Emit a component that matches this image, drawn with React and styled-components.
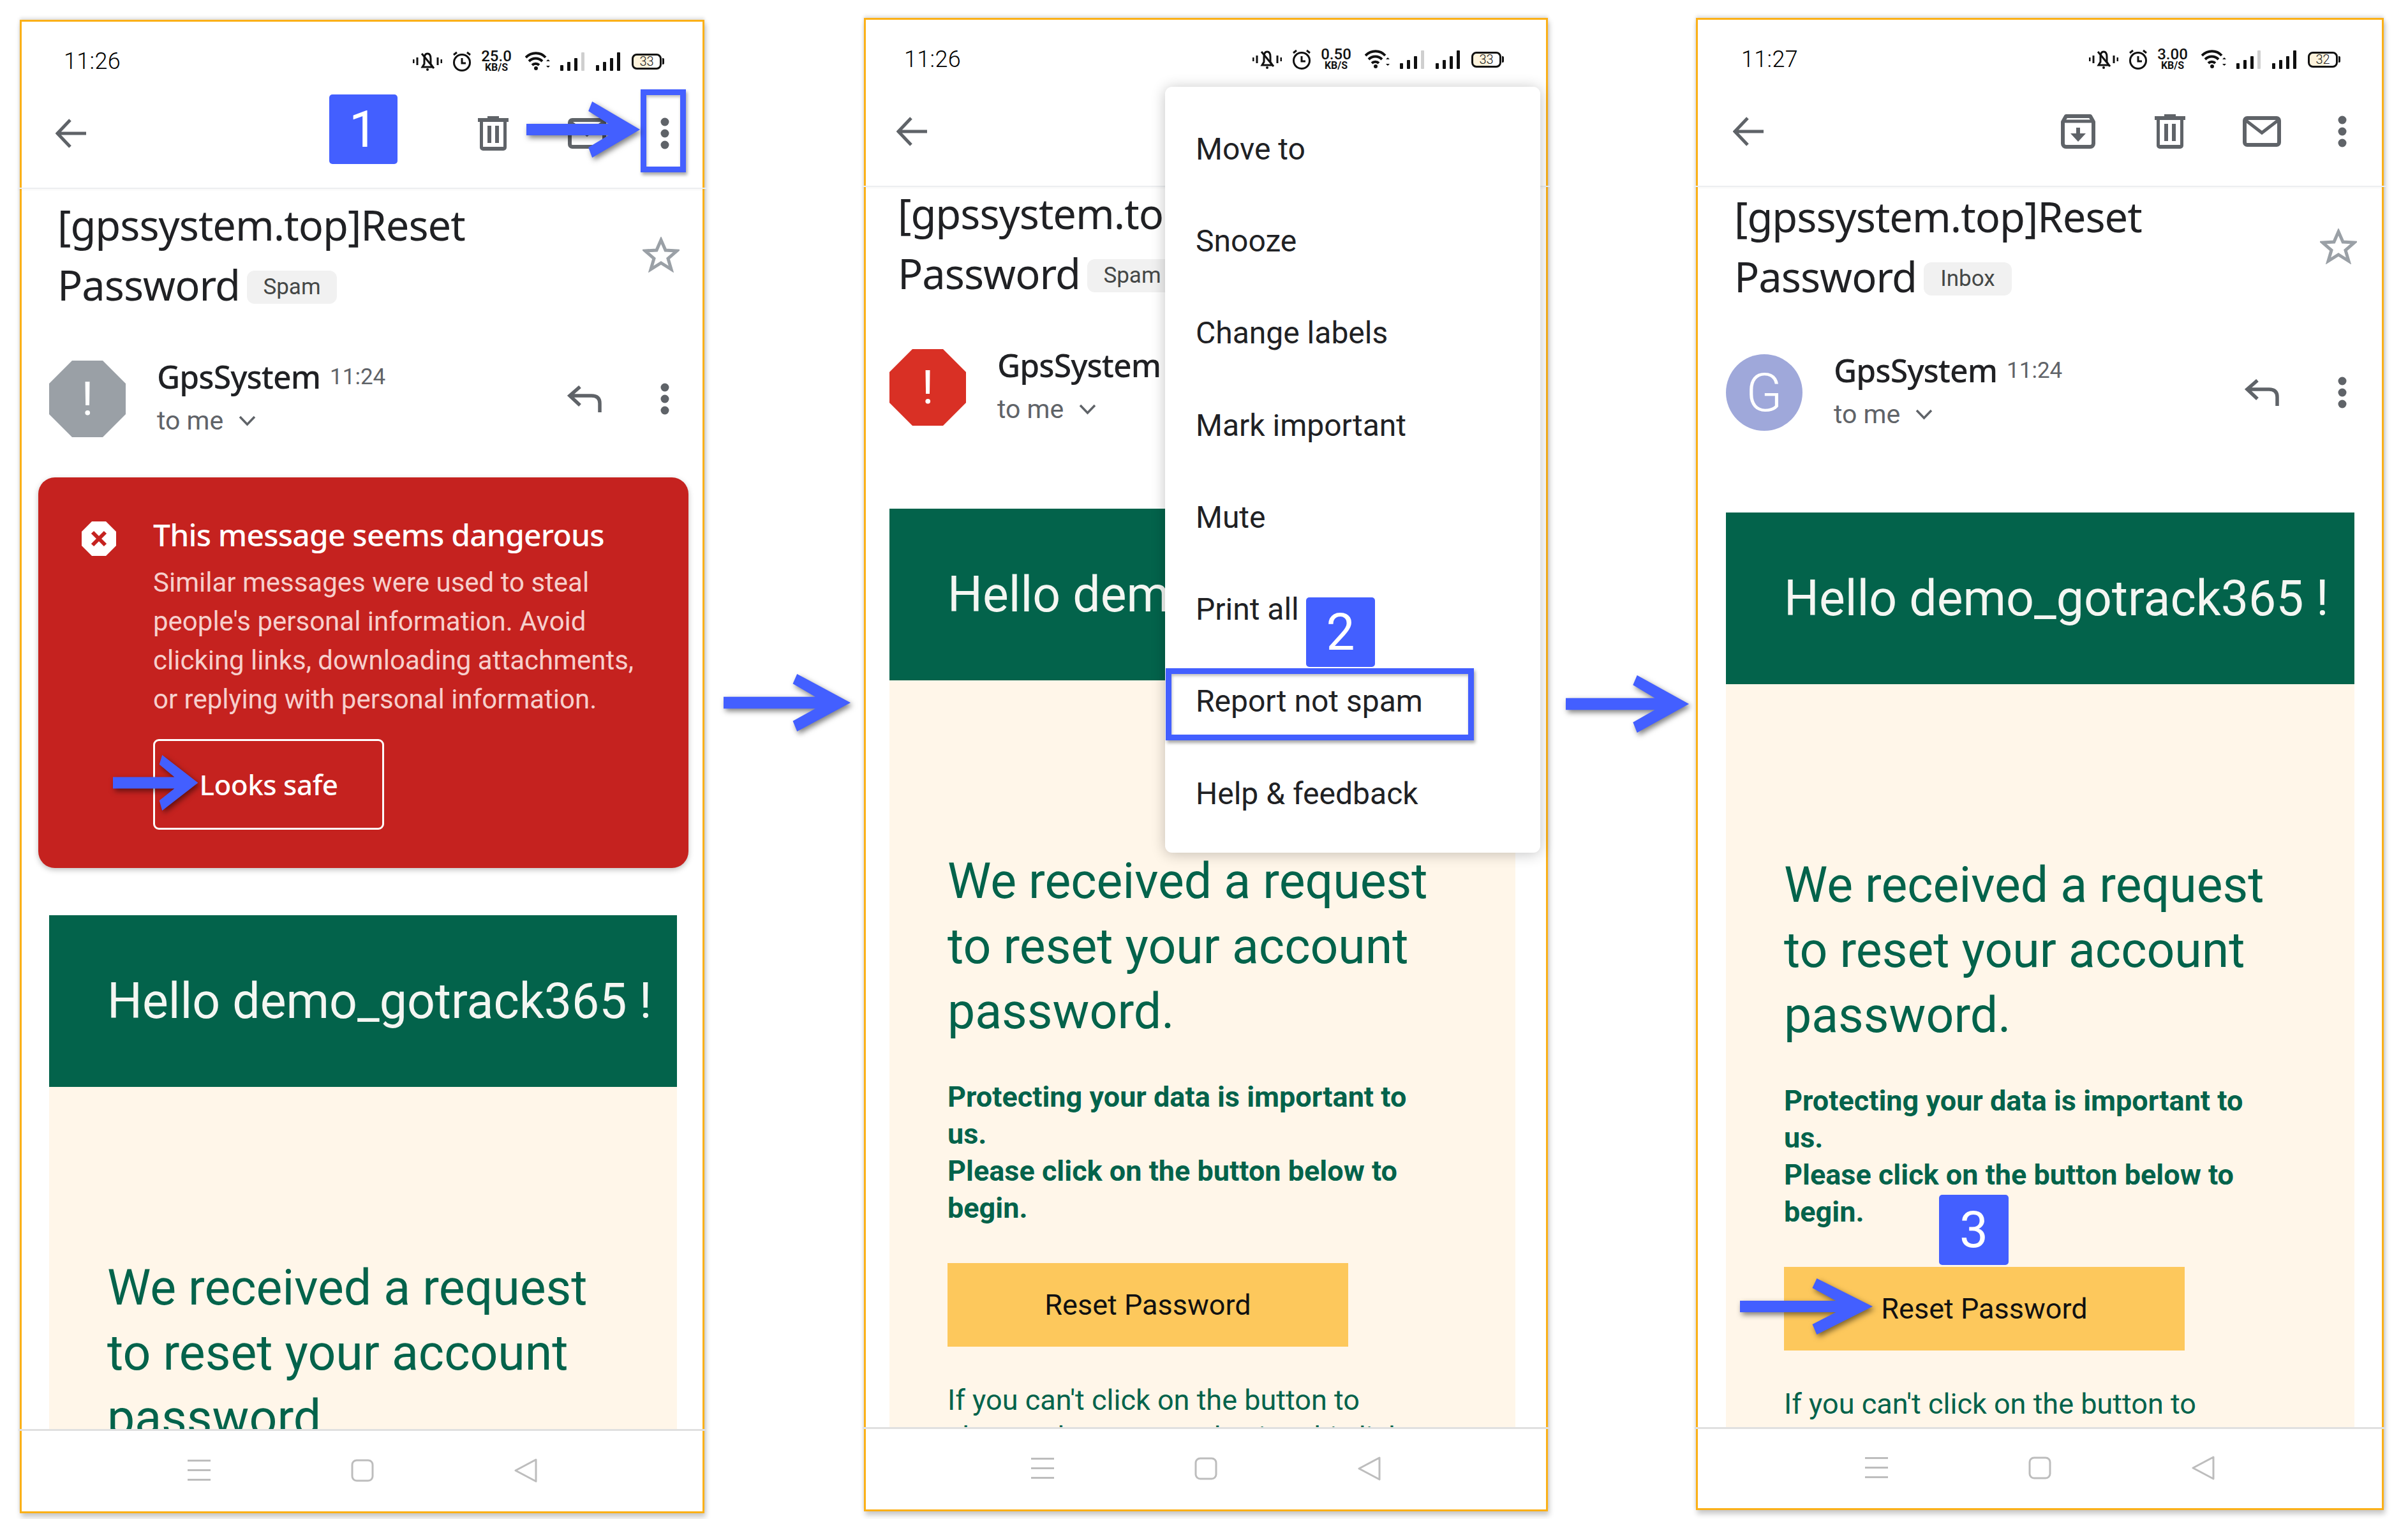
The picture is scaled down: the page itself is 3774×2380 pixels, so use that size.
import React from "react";
import styled, { createGlobalStyle } from "styled-components";

const Global = createGlobalStyle`
  html, body { margin: 0; padding: 0; background: #fff; }
  * { box-sizing: border-box; }
`;

const BLUE = "#435fff";
const GREEN = "#03634b";
const INK = "#202124";
const GREY = "#5f6368";

const Page = styled.div`
  position: relative;
  width: 3774px;
  height: 2380px;
  background: #fff;
  overflow: hidden;
  display: flex;
  align-items: flex-start;
  padding-left: 31px;
  font-family: Roboto, "Liberation Sans", sans-serif;
  color: ${INK};
`;

const Phone = styled.section`
  position: relative;
  flex: none;
  width: ${(p) => p.$w}px;
  height: ${(p) => p.$h}px;
  margin-top: ${(p) => p.$top}px;
  border: 3px solid #fbb017;
  background: #fff;
  box-shadow: 0 -3px 5px rgba(0, 0, 0, 0.12), 2px 6px 8px rgba(0, 0, 0, 0.22);
  display: flex;
  flex-direction: column;
`;

const Gap = styled.div`
  flex: none;
  width: ${(p) => p.$w}px;
  padding-left: ${(p) => p.$pad}px;
  margin-top: ${(p) => p.$top}px;
  display: flex;
`;

const StatusBar = styled.div`
  flex: none;
  height: 124px;
  display: flex;
  align-items: center;
  padding: 0 ${(p) => p.$right}px 0 ${(p) => p.$left}px;
`;

const Clock = styled.span`
  font-size: 36px;
  font-weight: 350;
  color: #000;
  letter-spacing: 0.3px;
  margin-right: auto;
`;

const StatusIcons = styled.div`
  display: flex;
  align-items: center;
  height: 34px;
`;

const AlarmSlot = styled.span`
  display: flex;
  margin-left: 16px;
`;

const Speed = styled.div`
  width: 48px;
  margin: 0 21px 0 15px;
  display: flex;
  flex-direction: column;
  align-items: center;
  color: #111;
  font-size: 24px;
  font-weight: 500;
  line-height: 19px;
  & > small {
    font-size: 16px;
    font-weight: 700;
    line-height: 15px;
  }
`;

const Battery = styled.div`
  position: relative;
  width: 47px;
  height: 25px;
  margin-left: 18px;
  margin-right: 4px;
  border: 3px solid #111;
  border-radius: 8px;
  background: linear-gradient(90deg, #fdf3dc 0 60%, #fff 60%);
  display: flex;
  align-items: center;
  justify-content: center;
  font-size: 20px;
  font-weight: 300;
  color: #222;
  &::after {
    content: "";
    position: absolute;
    right: -7px;
    top: 4px;
    width: 3px;
    height: 10px;
    background: #111;
    border-radius: 0 2px 2px 0;
  }
`;

const Toolbar = styled.div`
  position: relative;
  z-index: 2;
  flex: none;
  height: 138px;
  background: #fff;
  display: flex;
  align-items: flex-start;
  padding: 26px ${(p) => p.$right}px 0 ${(p) => p.$left}px;
  &::after {
    content: "";
    position: absolute;
    left: -6px;
    right: -6px;
    bottom: 0;
    height: 2px;
    background: #eceef0;
    box-shadow: 0 2px 3px rgba(0, 0, 0, 0.04);
  }
`;

const ToolSlot = styled.div`
  height: 50px;
  display: flex;
  align-items: center;
  margin-left: ${(p) => p.$ml || "0"};
`;

const Scroll = styled.div`
  flex: 1;
  min-height: 0;
  overflow: hidden;
  padding: 0 ${(p) => p.$right}px 0 ${(p) => p.$left}px;
`;

const SubjectRow = styled.div`
  display: flex;
  align-items: center;
  justify-content: space-between;
  padding-left: 13px;
  margin-right: -4px;
  margin-top: ${(p) => p.$mt}px;
`;

const Subject = styled.h1`
  margin: 0;
  font-family: "Noto Sans", Roboto, sans-serif;
  font-size: 65px;
  font-weight: 400;
  line-height: 94px;
  color: ${INK};
  white-space: nowrap;
  letter-spacing: -1px;
`;

const Chip = styled.span`
  display: inline-flex;
  vertical-align: 10px;
  align-items: center;
  justify-content: center;
  width: ${(p) => p.$w}px;
  height: 52px;
  margin-left: 11px;
  border-radius: 12px;
  background: #f1f1f1;
  font-family: Roboto, sans-serif;
  font-size: 35px;
  letter-spacing: 0;
  color: #444746;
`;

const SenderRow = styled.div`
  display: flex;
  align-items: center;
  height: 120px;
  margin-top: ${(p) => p.$mt}px;
  padding-right: 11px;
`;

const Avatar = styled.div`
  flex: none;
  width: 120px;
  height: 120px;
  background: ${(p) => p.$color};
  color: #fff;
  display: flex;
  align-items: center;
  justify-content: center;
  font-size: ${(p) => (p.$round ? 84 : 72)}px;
  font-weight: ${(p) => (p.$round ? 300 : 400)};
  border-radius: ${(p) => (p.$round ? "50%" : "0")};
  clip-path: ${(p) =>
    p.$round ? "none" : "polygon(30% 0, 70% 0, 100% 30%, 100% 70%, 70% 100%, 30% 100%, 0 70%, 0 30%)"};
`;

const SenderText = styled.div`
  flex: 1;
  min-width: 0;
  height: 120px;
  padding-left: 49px;
`;

const NameLine = styled.div`
  height: 50px;
  display: flex;
  align-items: center;
  gap: 15px;
  white-space: nowrap;
`;

const Name = styled.span`
  font-family: "Noto Sans", Roboto, sans-serif;
  font-size: 50px;
  font-weight: 500;
  letter-spacing: -1px;
  color: ${INK};
`;

const Stamp = styled.span`
  font-size: 35px;
  color: ${GREY};
`;

const ToLine = styled.div`
  height: 50px;
  margin-top: 19px;
  display: flex;
  align-items: center;
  gap: 24px;
  font-size: 41px;
  color: ${GREY};
`;

const ReplyIcons = styled.div`
  display: flex;
  align-items: center;
  gap: 91px;
`;

const Warning = styled.div`
  margin: 63px -18px 0 -17px;
  height: 612px;
  padding: 60px 40px 0 68px;
  border-radius: 26px;
  background: #c5221f;
  box-shadow: 0 3px 8px rgba(0, 0, 0, 0.25);
  display: grid;
  grid-template-columns: 54px 1fr;
  column-gap: 58px;
`;

const WarnIcon = styled.div`
  margin-top: 9px;
  height: 54px;
`;

const WarnTitle = styled.div`
  font-family: "Noto Sans", Roboto, sans-serif;
  font-size: 48px;
  font-weight: 500;
  line-height: 60px;
  letter-spacing: -0.8px;
  color: #fff;
  white-space: nowrap;
`;

const WarnBody = styled.p`
  margin: 14px 0 0;
  font-size: 42px;
  line-height: 61px;
  color: #f6cfcc;
  white-space: nowrap;
`;

const SafeButton = styled.div`
  width: 362px;
  height: 142px;
  margin-top: 32px;
  border: 3px solid #fff;
  border-radius: 9px;
  color: #fff;
  font-family: "Noto Sans", Roboto, sans-serif;
  font-size: 44px;
  font-weight: 500;
  letter-spacing: -0.5px;
  display: flex;
  align-items: center;
  justify-content: center;
`;

const Hero = styled.div`
  height: 269px;
  margin-top: ${(p) => p.$mt}px;
  background: ${GREEN};
  color: #f4f6f2;
  display: flex;
  align-items: center;
  padding-left: 91px;
  font-size: 77px;
  white-space: nowrap;
  overflow: hidden;
`;

const Cream = styled.div`
  background: #fff6e9;
  color: ${GREEN};
  padding: 264px 91px 80px;
  min-height: 1200px;
`;

const Lead = styled.h2`
  margin: 0;
  font-size: 77px;
  font-weight: 400;
  line-height: 102px;
  white-space: nowrap;
`;

const Strong = styled.p`
  margin: 54px 0 0;
  font-size: 45px;
  font-weight: 700;
  line-height: 58px;
  white-space: nowrap;
`;

const Reset = styled.div`
  width: 628px;
  height: 131px;
  margin-top: 57px;
  background: #fdc85c;
  color: #111;
  font-size: 45px;
  display: flex;
  align-items: center;
  justify-content: center;
`;

const Small = styled.p`
  margin: 55px 0 0;
  font-size: 45px;
  line-height: 58px;
  white-space: nowrap;
`;

const Nav = styled.div`
  position: relative;
  z-index: 2;
  flex: none;
  height: ${(p) => p.$h}px;
  background: #fff;
  display: flex;
  align-items: center;
  justify-content: center;
  gap: 220px;
  &::before {
    content: "";
    position: absolute;
    left: -5px;
    right: -5px;
    top: 0;
    height: 3px;
    background: #e0e0e0;
  }
`;

const Menu = styled.div`
  position: absolute;
  z-index: 4;
  left: 469px;
  top: 105px;
  width: 588px;
  height: 1200px;
  padding: 25px 0;
  background: #fff;
  border-radius: 11px;
  box-shadow: 0 2px 22px rgba(0, 0, 0, 0.24);
`;

const MenuItem = styled.div`
  height: 144.3px;
  padding-left: 48px;
  display: flex;
  align-items: center;
  font-size: 48px;
  color: ${INK};
`;

const Badge = styled.div`
  position: absolute;
  z-index: 6;
  left: ${(p) => p.$x}px;
  top: ${(p) => p.$y}px;
  width: ${(p) => p.$w}px;
  height: ${(p) => p.$h}px;
  background: ${BLUE};
  border-radius: 5px;
  color: #fff;
  font-size: 80px;
  font-weight: 400;
  display: flex;
  align-items: center;
  justify-content: center;
`;

const Highlight = styled.div`
  position: absolute;
  z-index: 6;
  left: ${(p) => p.$x}px;
  top: ${(p) => p.$y}px;
  width: ${(p) => p.$w}px;
  height: ${(p) => p.$h}px;
  border: 9px solid ${BLUE};
  box-shadow: 2px 4px 5px rgba(0, 0, 0, 0.35), inset 1px 3px 4px rgba(0, 0, 0, 0.25);
`;

const ArrowSvg = styled.svg`
  display: block;
  flex: none;
  overflow: visible;
  filter: drop-shadow(3px 4px 4px rgba(0, 0, 0, 0.5));
`;

const FloatingArrow = styled.div`
  position: absolute;
  z-index: 6;
  left: ${(p) => p.$x}px;
  top: ${(p) => p.$y}px;
`;

const Arrow = ({ w, h }) => (
  <ArrowSvg width={w} height={h} viewBox="0 0 210 88" preserveAspectRatio="none">
    <polygon points="0,35 151,35 114,15 121,0 209,44 121,88 114,72 151,53 0,53" fill={BLUE} />
  </ArrowSvg>
);

const BackIcon = () => (
  <svg width="48" height="46" viewBox="0 0 48 46" fill="none" stroke={GREY} strokeWidth="5">
    <path d="M23 2 L3 23 L23 44 M3 23 H48" />
  </svg>
);

const TrashIcon = () => (
  <svg width="48" height="54" viewBox="0 0 48 54" fill={GREY}>
    <rect x="15" y="0" width="18" height="4" />
    <rect x="0" y="3" width="48" height="6" />
    <path d="M3 8h5v40h32V8h5v41a5 5 0 0 1-5 5H8a5 5 0 0 1-5-5z" />
    <rect x="15" y="15" width="6" height="27" />
    <rect x="27" y="15" width="6" height="27" />
  </svg>
);

const MailIcon = () => (
  <svg width="60" height="48" viewBox="0 0 60 48" fill="none" stroke={GREY}>
    <rect x="3" y="3" width="54" height="42" rx="4" strokeWidth="6" />
    <path d="M4 6 L30 26 L56 6" strokeWidth="5" />
  </svg>
);

const ArchiveIcon = () => (
  <svg width="54" height="54" viewBox="0 0 54 54" fill="none" stroke={GREY}>
    <path d="M3 12 L8 3 H46 L51 12 V46 a5 5 0 0 1-5 5 H8 a5 5 0 0 1-5-5 Z" strokeWidth="6" strokeLinejoin="round" />
    <path d="M3 11 H51" strokeWidth="5" />
    <path d="M24 21 H30 V30 H39 L27 43 L15 30 H24 Z" fill={GREY} stroke="none" />
  </svg>
);

const Dots = () => (
  <svg width="16" height="50" viewBox="0 0 16 50" fill={GREY}>
    <circle cx="8" cy="7" r="6.5" />
    <circle cx="8" cy="25" r="6.5" />
    <circle cx="8" cy="43" r="6.5" />
  </svg>
);

const StarIcon = () => (
  <svg width="58" height="56" viewBox="0 0 58 56" fill="none" stroke="#9aa0a6" strokeWidth="5">
    <polygon points="29,5 36,21 54,22 40,34 45,51 29,41 13,51 18,34 4,22 22,21" />
  </svg>
);

const ReplyIcon = () => (
  <svg width="54" height="42" viewBox="0 0 54 42" fill="none" stroke={GREY} strokeWidth="5.5">
    <path d="M20 2 L4 16 L20 31 M4 16 H38 Q51 16 51 28 V42" />
  </svg>
);

const Chevron = () => (
  <svg width="27" height="17" viewBox="0 0 27 17" fill="none" stroke={GREY} strokeWidth="3.5">
    <path d="M2 2 L13.5 14 L25 2" />
  </svg>
);

const BellIcon = () => (
  <svg width="46" height="32" viewBox="0 0 46 32" fill="none" stroke="#111" strokeWidth="3">
    <path d="M15 25 H31 L28 20 V12 C28 7 26 4 23 4 C20 4 18 7 18 12 V20 Z" />
    <path d="M14 4 L33 27" />
    <path d="M1 13 V19 M7 10 V22 M39 10 V22 M45 13 V19" />
    <circle cx="23" cy="29" r="2" fill="#111" stroke="none" />
  </svg>
);

const AlarmIcon = () => (
  <svg width="30" height="32" viewBox="0 0 30 32" fill="none" stroke="#111" strokeWidth="3">
    <circle cx="15" cy="18" r="12.5" />
    <path d="M15 11 V19 H21" />
    <path d="M2 6 L7 2 M28 6 L23 2" />
  </svg>
);

const WifiIcon = () => (
  <svg width="40" height="30" viewBox="0 0 40 30" fill="none" stroke="#111" strokeWidth="4">
    <path d="M1 9 C10 0 24 0 32 9" />
    <path d="M6 15 C12 9 21 9 27 15" />
    <path d="M11 21 C14 18 19 18 22 21" />
    <circle cx="17" cy="26" r="3" fill="#111" stroke="none" />
    <path d="M36 12 L33 15 H39 Z M36 25 L33 22 H39 Z" fill="#111" stroke="none" />
  </svg>
);

const SignalSvg = styled.svg`
  margin-left: ${(p) => p.$ml}px;
`;

const SignalIcon = ({ dim, ml }) => (
  <SignalSvg width="38" height="31" viewBox="0 0 38 31" fill="#111" $ml={ml}>
    <rect x="0" y="21" width="5" height="9" rx="1" />
    <rect x="11" y="16" width="5" height="14" rx="1" />
    <rect x="22" y="10" width="5" height="20" rx="1" />
    <rect x="33" y="1" width="5" height="29" rx="1" fill={dim ? "#cfcfcf" : "#111"} />
  </SignalSvg>
);

const NavMenuIcon = () => (
  <svg width="36" height="33" viewBox="0 0 36 33" fill="#bdbdbd">
    <rect y="0" width="36" height="3" />
    <rect y="15" width="36" height="3" />
    <rect y="30" width="36" height="3" />
  </svg>
);

const NavHomeIcon = () => (
  <svg width="36" height="36" viewBox="0 0 36 36" fill="none" stroke="#bdbdbd" strokeWidth="3">
    <rect x="2" y="2" width="32" height="32" rx="7" />
  </svg>
);

const NavBackIcon = () => (
  <svg width="36" height="38" viewBox="0 0 36 38" fill="none" stroke="#bdbdbd" strokeWidth="3" strokeLinejoin="round">
    <path d="M34 2 L2 19 L34 36 Z" />
  </svg>
);

const WarnGlyph = () => (
  <svg width="54" height="54" viewBox="0 0 54 54">
    <polygon points="16,0 38,0 54,16 54,38 38,54 16,54 0,38 0,16" fill="#fff" />
    <path d="M17 17 L37 37 M37 17 L17 37" stroke="#c5221f" strokeWidth="6" />
  </svg>
);

const Status = ({ left, right, time, speed, battery }) => (
  <StatusBar $left={left} $right={right}>
    <Clock>{time}</Clock>
    <StatusIcons>
      <BellIcon />
      <AlarmSlot><AlarmIcon /></AlarmSlot>
      <Speed>
        {speed}
        <small>KB/S</small>
      </Speed>
      <WifiIcon />
      <SignalIcon dim ml={15} />
      <SignalIcon ml={18} />
      <Battery>{battery}</Battery>
    </StatusIcons>
  </StatusBar>
);

const SubjectBlock = ({ label, chipW, mt, showStar = true }) => (
  <SubjectRow $mt={mt}>
    <Subject>
      [gpssystem.top]Reset
      <br />
      Password<Chip $w={chipW}>{label}</Chip>
    </Subject>
    {showStar && <StarIcon />}
  </SubjectRow>
);

const Sender = ({ color, round, glyph, mt }) => (
  <SenderRow $mt={mt}>
    <Avatar $color={color} $round={round}>{glyph}</Avatar>
    <SenderText>
      <NameLine>
        <Name>GpsSystem</Name>
        <Stamp>11:24</Stamp>
      </NameLine>
      <ToLine>
        to me
        <Chevron />
      </ToLine>
    </SenderText>
    <ReplyIcons>
      <ReplyIcon />
      <Dots />
    </ReplyIcons>
  </SenderRow>
);

const MailBody = ({ mt }) => (
  <>
    <Hero $mt={mt}>Hello demo_gotrack365 !</Hero>
    <Cream>
      <Lead>
        We received a request
        <br />
        to reset your account
        <br />
        password.
      </Lead>
      <Strong>
        Protecting your data is important to
        <br />
        us.
        <br />
        Please click on the button below to
        <br />
        begin.
      </Strong>
      <Reset>Reset Password</Reset>
      <Small>
        If you can't click on the button to
        <br />
        change the password using this link
      </Small>
    </Cream>
  </>
);

const NavBar = ({ h }) => (
  <Nav $h={h}>
    <NavMenuIcon />
    <NavHomeIcon />
    <NavBackIcon />
  </Nav>
);

const menuItems = [
  "Move to",
  "Snooze",
  "Change labels",
  "Mark important",
  "Mute",
  "Print all",
  "Report not spam",
  "Help & feedback",
];

export default function App() {
  return (
    <Page>
      <Global />

      <Phone $w={1073} $h={2340} $top={31}>
        <Status left={66} right={60} time="11:26" speed="25.0" battery="33" />
        <Toolbar $left={53} $right={51}>
          <ToolSlot><BackIcon /></ToolSlot>
          <ToolSlot $ml="auto"><TrashIcon /></ToolSlot>
          <ToolSlot $ml="93px"><MailIcon /></ToolSlot>
          <ToolSlot $ml="84px"><Dots /></ToolSlot>
        </Toolbar>
        <Scroll $left={43} $right={40}>
          <SubjectBlock label="Spam" chipW={141} mt={9} />
          <Sender color="#9aa0a6" glyph="!" mt={72} />
          <Warning>
            <WarnIcon><WarnGlyph /></WarnIcon>
            <div>
              <WarnTitle>This message seems dangerous</WarnTitle>
              <WarnBody>
                Similar messages were used to steal
                <br />
                people's personal information. Avoid
                <br />
                clicking links, downloading attachments,
                <br />
                or replying with personal information.
              </WarnBody>
              <SafeButton>Looks safe</SafeButton>
            </div>
          </Warning>
          <MailBody mt={74} />
        </Scroll>
        <NavBar h={129} />
      </Phone>

      <Gap $w={250} $pad={30} $top={1056}>
        <Arrow w={200} h={90} />
      </Gap>

      <Phone $w={1072} $h={2340} $top={28}>
        <Status left={60} right={66} time="11:26" speed="0.50" battery="33" />
        <Toolbar $left={48} $right={51}>
          <ToolSlot><BackIcon /></ToolSlot>
        </Toolbar>
        <Scroll $left={37} $right={48}>
          <SubjectBlock label="Spam" chipW={141} mt={-6} showStar={false} />
          <Sender color="#d93025" glyph="!" mt={72} />
          <MailBody mt={130} />
        </Scroll>
        <NavBar h={129} />
        <Menu>
          {menuItems.map((m) => (
            <MenuItem key={m}>{m}</MenuItem>
          ))}
        </Menu>
      </Phone>

      <Gap $w={232} $pad={28} $top={1058}>
        <Arrow w={194} h={90} />
      </Gap>

      <Phone $w={1078} $h={2338} $top={28}>
        <Status left={68} right={65} time="11:27" speed="3.00" battery="32" />
        <Toolbar $left={55} $right={54}>
          <ToolSlot><BackIcon /></ToolSlot>
          <ToolSlot $ml="auto"><ArchiveIcon /></ToolSlot>
          <ToolSlot $ml="93px"><TrashIcon /></ToolSlot>
          <ToolSlot $ml="90px"><MailIcon /></ToolSlot>
          <ToolSlot $ml="88px"><Dots /></ToolSlot>
        </Toolbar>
        <Scroll $left={44} $right={43}>
          <SubjectBlock label="Inbox" chipW={138} mt={-1} />
          <Sender color="#9fa8da" round glyph="G" mt={75} />
          <MailBody mt={128} />
        </Scroll>
        <NavBar h={127} />
      </Phone>

      <Badge $x={516} $y={148} $w={107} $h={109}>1</Badge>
      <Highlight $x={1004} $y={140} $w={71} $h={130} />
      <FloatingArrow $x={825} $y={159}><Arrow w={179} h={88} /></FloatingArrow>
      <FloatingArrow $x={177} $y={1183}><Arrow w={134} h={87} /></FloatingArrow>
      <Badge $x={2047} $y={936} $w={108} $h={109}>2</Badge>
      <Highlight $x={1827} $y={1047} $w={483} $h={113} />
      <Badge $x={3039} $y={1872} $w={109} $h={110}>3</Badge>
      <FloatingArrow $x={2727} $y={2003}><Arrow w={209} h={88} /></FloatingArrow>
    </Page>
  );
}
